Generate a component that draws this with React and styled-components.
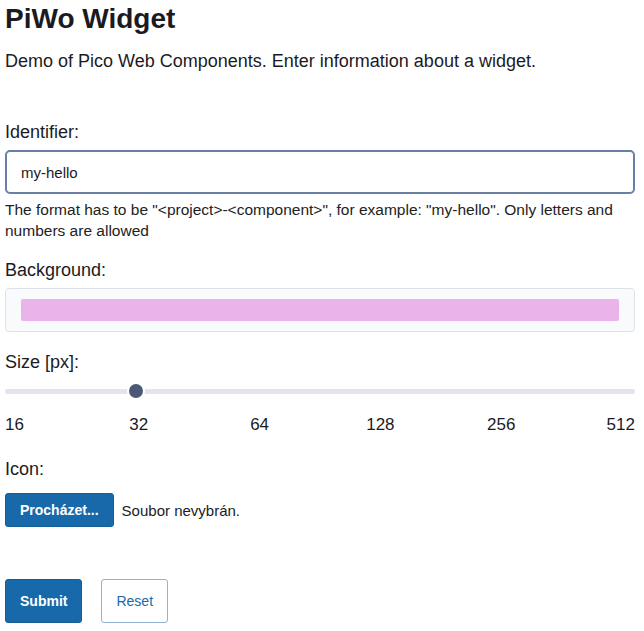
import React from "react";
import styled, { createGlobalStyle } from "styled-components";

const GlobalStyle = createGlobalStyle`
  body {
    margin: 0;
    background: #fff;
    color: #1b1b1f;
    font-family: "Liberation Sans", Arial, sans-serif;
  }
`;

const Page = styled.main`
  padding: 2px 9px 0 5px;
`;

const Title = styled.h1`
  margin: 0;
  font-size: 28px;
  line-height: 34px;
  font-weight: 700;
`;

const Lead = styled.p`
  margin: 12px 0 45px;
  font-size: 18px;
  line-height: 26px;
`;

const Form = styled.form`
  display: flex;
  flex-direction: column;
`;

const Field = styled.div`
  display: flex;
  flex-direction: column;
  margin-bottom: ${(p) => p.$space ?? 20}px;
`;

const Label = styled.label`
  font-size: 18px;
  line-height: 26px;
  margin-bottom: 5px;
`;

const TextInput = styled.input`
  box-sizing: border-box;
  height: 44px;
  padding: 0 14px;
  font: inherit;
  font-size: 15px;
  color: #1b1b1f;
  border: 2px solid #6a7fa6;
  border-radius: 5px;
  outline: none;
`;

const Help = styled.small`
  margin-top: 5px;
  font-size: 15.5px;
  line-height: 21px;
  color: #222;
`;

const ColorInput = styled.input`
  box-sizing: border-box;
  width: 100%;
  height: 44px;
  padding: 10px 15px;
  background: #f9fafb;
  border: 1px solid #dde2ea;
  border-radius: 4px;
  -webkit-appearance: none;
  appearance: none;
  cursor: pointer;

  &::-webkit-color-swatch-wrapper {
    padding: 0;
  }
  &::-webkit-color-swatch {
    border: none;
    border-radius: 2px;
  }
`;

const Range = styled.input`
  -webkit-appearance: none;
  appearance: none;
  width: 100%;
  height: 18px;
  margin: 2px 0 13px;
  background: transparent;

  &::-webkit-slider-runnable-track {
    height: 5px;
    border-radius: 3px;
    background: #e2e6ec;
  }
  &::-webkit-slider-thumb {
    -webkit-appearance: none;
    width: 18px;
    height: 18px;
    margin-top: -6.5px;
    border-radius: 50%;
    background: #4c5878;
    border: 2px solid #fff;
    box-sizing: border-box;
  }
`;

const Ticks = styled.div`
  display: flex;
  justify-content: space-between;
  font-size: 17px;
  line-height: 24px;
`;

const Tick = styled.span`
  width: 26px;
  text-align: center;
  white-space: nowrap;
  display: flex;
  justify-content: center;

  &:first-child {
    justify-content: flex-start;
  }
  &:last-child {
    justify-content: flex-end;
  }
`;

const FileRow = styled.div`
  display: flex;
  align-items: center;
  gap: 8px;
  margin-top: 6px;
`;

const Button = styled.button`
  box-sizing: border-box;
  height: ${(p) => p.$h || 44}px;
  padding: 0 ${(p) => p.$px || 14}px;
  font: inherit;
  font-size: 14px;
  font-weight: ${(p) => (p.$outline ? 400 : 700)};
  color: ${(p) => (p.$outline ? "#1769aa" : "#fff")};
  background: ${(p) => (p.$outline ? "#fff" : "#1769aa")};
  border: 1px solid ${(p) => (p.$outline ? "#8fb3d6" : "#155f99")};
  border-radius: 3px;
  cursor: pointer;
`;

const FileName = styled.span`
  font-size: 15px;
`;

const Actions = styled.div`
  display: flex;
  gap: 19px;
  margin-top: 52px;
`;

const sizes = [16, 32, 64, 128, 256, 512];

export default function App() {
  const [size, setSize] = React.useState(1);
  const fileRef = React.useRef(null);

  return (
    <Page>
      <GlobalStyle />
      <Title>PiWo Widget</Title>
      <Lead>Demo of Pico Web Components. Enter information about a widget.</Lead>
      <Form onSubmit={(e) => e.preventDefault()}>
        <Field $space={16}>
          <Label htmlFor="ident">Identifier:</Label>
          <TextInput id="ident" defaultValue="my-hello" />
          <Help>
            The format has to be "&lt;project&gt;-&lt;component&gt;", for example:
            "my-hello". Only letters and numbers are allowed
          </Help>
        </Field>
        <Field $space={17}>
          <Label htmlFor="bg">Background:</Label>
          <ColorInput id="bg" type="color" defaultValue="#eab3ea" />
        </Field>
        <Field $space={19}>
          <Label htmlFor="size">Size [px]:</Label>
          <Range
            id="size"
            type="range"
            min="0"
            max="5"
            step="1"
            value={size}
            onChange={(e) => setSize(+e.target.value)}
          />
          <Ticks>
            {sizes.map((s) => (
              <Tick key={s}>{s}</Tick>
            ))}
          </Ticks>
        </Field>
        <Field $space={0}>
          <Label>Icon:</Label>
          <FileRow>
            <Button type="button" $h={34} onClick={() => fileRef.current?.click()}>
              Procházet...
            </Button>
            <FileName>Soubor nevybrán.</FileName>
            <input ref={fileRef} type="file" hidden />
          </FileRow>
        </Field>
        <Actions>
          <Button type="submit">Submit</Button>
          <Button type="reset" $outline>
            Reset
          </Button>
        </Actions>
      </Form>
    </Page>
  );
}
